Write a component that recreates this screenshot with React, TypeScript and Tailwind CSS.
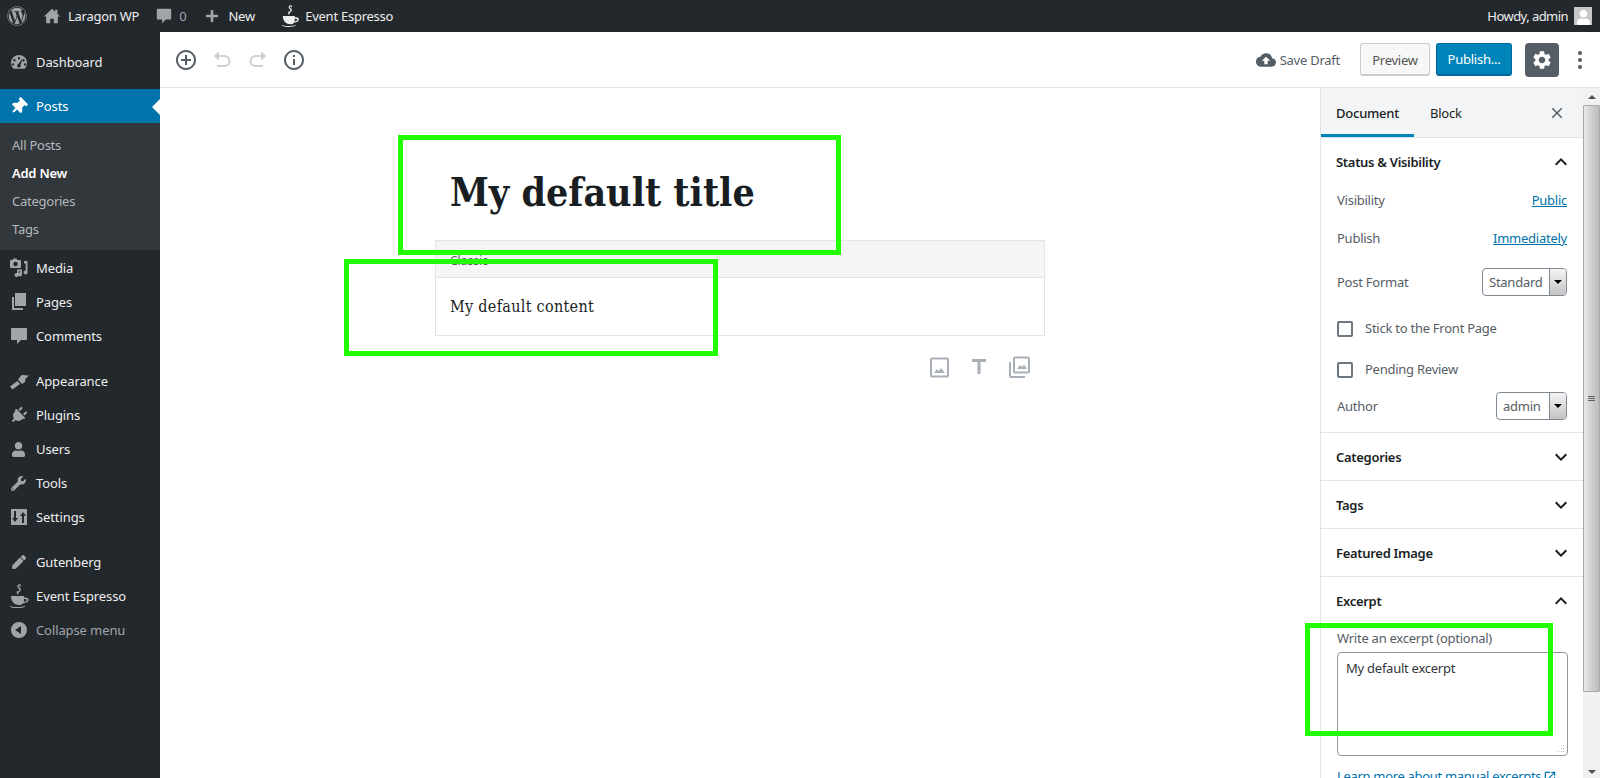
import type { ReactNode } from "react";
import { FaWordpress, FaPlus, FaThumbtack, FaPlug, FaUser, FaWrench, FaPen } from "react-icons/fa";
import {
  MdAddCircleOutline, MdInfoOutline, MdCloudUpload, MdSettings, MdClose,
  MdKeyboardArrowUp, MdKeyboardArrowDown, MdTitle, MdOpenInNew,
} from "react-icons/md";

const Cup = ({ size = 24 }: { size?: number }) => (
  <svg width={(size * 20) / 24} height={size} viewBox="0 0 20 24" fill="currentColor">
    <path stroke="currentColor" strokeWidth="0.5" d="M9 1c2-1 3 0 3 1l-1 0c0-1-1-1-1.500-.5-1 1 3 2.500 2 5-.4 1-1.500 1.500-2.500 1.500 1 1 0 2 0 2h-1c.5-1 .5-1.500-.5-2l1-.5c1 0 2-.5 2-1 .5-2-3-3-1.500-5.500z" />
    <path d="M2 12h13v1.500h1.500c2 0 3 1 3 2.200 0 2-2.500 3.300-5 3.300-1 1.500-2.500 2-4.500 2-4 0-8-3-8-9zm13 3c0 1 0 2-.2 2.800 1.800-.2 3-.8 3-1.800 0-.8-1-1-2.800-1z" />
    <path d="M1 21.500c1 1 3 1.500 7 1.500s7-.5 8-1.500v1c-1 1-4 1.500-8 1.500s-6-.5-7-1.500z" />
  </svg>
);

const Home = () => (
  <svg width="18" height="18" viewBox="0 0 20 20" fill="currentColor">
    <path d="M10 2 1 10.500h2.500V18H8v-5h4v5h4.500v-7.500H19l-3-3V3h-2.500v2.200z" />
  </svg>
);

const Dash = () => (
  <svg width="20" height="20" viewBox="0 0 20 20" fill="currentColor">
    <path fillRule="evenodd" d="M10 3a8 8 0 0 1 8 8c0 2.200-.9 4.200-2.300 5.700H4.300A8 8 0 0 1 2 11a8 8 0 0 1 8-8zM10 5a1.200 1.200 0 1 0 0 2.400A1.200 1.200 0 0 0 10 5zM5.500 7a1.200 1.200 0 1 0 0 2.400 1.200 1.200 0 0 0 0-2.400zM14.500 7a1.200 1.200 0 1 0 0 2.400 1.200 1.200 0 0 0 0-2.400zM4 11.200a1.200 1.200 0 1 0 0 2.400 1.200 1.200 0 0 0 0-2.400zM16 11.200a1.200 1.200 0 1 0 0 2.400 1.200 1.200 0 0 0 0-2.400zM12.800 7.500l-3.400 4.600a1.800 1.800 0 1 0 2 .6l2-4.800z" />
  </svg>
);

const Media = () => (
  <svg width="20" height="20" viewBox="0 0 20 20" fill="currentColor">
    <path fillRule="evenodd" d="M1 2h2.500l1-1.500h3L8.500 2H11a1 1 0 0 1 1 1v6a1 1 0 0 1-1 1H2a1 1 0 0 1-1-1V3a1 1 0 0 1 1-1zm5.500 1.800a2.200 2.200 0 1 0 0 4.400 2.200 2.200 0 0 0 0-4.400z" />
    <path d="M13.500 3H18.500V14.500a2 2 0 1 1-1.800-2V5.500H15V3zM8 11.500h5v5a2 2 0 1 1-1.700-2v-1.200H9.500V17a2 2 0 1 1-1.500-2z" />
  </svg>
);

const Pages = () => (
  <svg width="20" height="20" viewBox="0 0 20 20" fill="currentColor">
    <path d="M6 1h11v13H6zM3 5h2v11h9v2H3z" />
  </svg>
);

const Bubble = ({ size = 20 }: { size?: number }) => (
  <svg width={size} height={size} viewBox="0 0 20 20" fill="currentColor">
    <path d="M3 2h14a1 1 0 0 1 1 1v10a1 1 0 0 1-1 1h-5l-4 4v-4H3a1 1 0 0 1-1-1V3a1 1 0 0 1 1-1z" />
  </svg>
);

const Brush = () => (
  <svg width="20" height="20" viewBox="0 0 20 20" fill="currentColor">
    <path d="M1 15.500 8.500 10l2.500 3-7.500 5.500zM9 8.500 12.500 4 20 4.500l-3.500 3.200L16 11l-3 2z" />
  </svg>
);

const Sliders = () => (
  <svg width="20" height="20" viewBox="0 0 20 20" fill="currentColor">
    <path fillRule="evenodd" d="M2 2h16v16H2zM5 4v7H3l3 4 3-4H7V4zM13 16V9h-2l3-4 3 4h-2v7z" />
  </svg>
);

const Collapse = () => (
  <svg width="20" height="20" viewBox="0 0 20 20" fill="currentColor">
    <path fillRule="evenodd" d="M10 2a8 8 0 1 1 0 16 8 8 0 0 1 0-16zm2 4-6 4 6 4z" />
  </svg>
);

const Undo = ({ flip }: { flip?: boolean }) => (
  <svg width="24" height="24" viewBox="0 0 24 24" className={flip ? "-scale-x-100" : ""} fill="none" stroke="currentColor" strokeWidth="2">
    <path d="M8 8h6.500a5 5 0 0 1 0 10H7" />
    <path d="M9 3.500 3.500 8 9 12.500z" fill="currentColor" stroke="none" />
  </svg>
);

const ImageIcon = () => (
  <svg width="24" height="24" viewBox="0 0 24 24" fill="none" stroke="currentColor" strokeWidth="2">
    <rect x="4" y="3.500" width="17" height="18" rx="1" />
    <path d="M7 18l3-4 2 2 2-3 4 5z" fill="currentColor" stroke="none" />
  </svg>
);

const GalleryIcon = () => (
  <svg width="24" height="24" viewBox="0 0 24 24" fill="none" stroke="currentColor" strokeWidth="2">
    <rect x="7" y="2.500" width="15" height="15" rx="1" />
    <path d="M3 7v14a1 1 0 0 0 1 1h14" />
    <path d="M10 14l3-4 2 2 2-2.500 3 4.500z" fill="currentColor" stroke="none" />
  </svg>
);

const NavRow = ({ icon, label, active, dim }: { icon: ReactNode; label: string; active?: boolean; dim?: boolean }) => (
  <div className={`relative flex h-[34px] items-center ${active ? "bg-[#0073aa] text-white" : dim ? "text-[#a0a5aa]" : "text-[#eeeeee]"}`}>
    <span className={`flex w-9 justify-center pl-[1px] ${active ? "text-white" : "text-[#a0a5aa]"}`}>{icon}</span>
    <span className="pt-[2px] text-[13px] tracking-[-0.1px]">{label}</span>
    {active && <span className="absolute right-0 top-[10px] h-0 w-0 border-y-[8px] border-r-[8px] border-y-transparent border-r-white" />}
  </div>
);

const SelectBox = ({ value, width }: { value: string; width: string }) => (
  <div className={`-mt-[2px] flex h-[28px] items-stretch overflow-hidden rounded-[4px] border border-[#7e8993] bg-white ${width}`}>
    <span className="flex-1 pl-[6px] text-[13px] leading-[27px] tracking-[-0.25px] text-[#555d66]">{value}</span>
    <span className="flex w-[17px] items-center justify-center border-l border-[#7e8993] bg-gradient-to-b from-[#f4f4f4] to-[#c4c4c4]">
      <span className="h-0 w-0 border-x-[4px] border-t-[4px] border-x-transparent border-t-black" />
    </span>
  </div>
);

const PanelHead = ({ label, open }: { label: string; open?: boolean }) => (
  <div className="flex h-[47px] items-center justify-between pl-[15px] pr-[10px]">
    <span className="pt-[2px] text-[13px] font-semibold tracking-[-0.3px] text-[#191e23]">{label}</span>
    {open ? <MdKeyboardArrowUp size={24} className="text-[#191e23]" /> : <MdKeyboardArrowDown size={24} className="text-[#191e23]" />}
  </div>
);

export default function App() {
  return (
    <div className="relative flex h-[778px] w-[1600px] flex-col overflow-hidden bg-white font-['Noto_Sans',sans-serif]">
      {/* admin bar */}
      <div className="flex h-8 shrink-0 items-center bg-[#23282d] text-[13px] tracking-[-0.25px] text-[#eeeeee]">
        <span className="ml-[7px] text-[#a0a5aa]"><FaWordpress size={20} /></span>
        <span className="ml-[16px] text-[#a0a5aa]"><Home /></span>
        <span className="ml-[7px] pt-[1px]">Laragon WP</span>
        <span className="ml-[16px] text-[#a0a5aa]"><Bubble size={18} /></span>
        <span className="ml-[6px] pt-[1px] text-[#a0a5aa]">0</span>
        <span className="ml-[19px] text-[#a0a5aa]"><FaPlus size={14} /></span>
        <span className="ml-[9px] pt-[1px]">New</span>
        <span className="ml-[26px] text-[#eeeeee]"><Cup size={22} /></span>
        <span className="ml-[6px] pt-[1px]">Event Espresso</span>
        <span className="ml-auto pt-[1px] tracking-[-0.55px]">Howdy, admin</span>
        <span className="ml-[6px] mr-[8px] flex h-[18px] w-[18px] items-end justify-center overflow-hidden bg-[#c8c8c8] text-white"><FaUser size={15} /></span>
      </div>

      <div className="flex min-h-0 flex-1">
        {/* admin menu */}
        <aside className="w-40 shrink-0 bg-[#23282d] pt-[13px]">
          <NavRow icon={<Dash />} label="Dashboard" />
          <div className="mt-[10px]">
            <NavRow icon={<FaThumbtack size={17} className="rotate-45" />} label="Posts" active />
          </div>
          <div className="bg-[#32373c] pb-[7px] pl-3 pt-[8px] text-[13px] tracking-[-0.25px] text-[#b4b9be]">
            <div className="h-7 leading-7">All Posts</div>
            <div className="h-7 font-semibold leading-7 text-white">Add New</div>
            <div className="h-7 leading-7">Categories</div>
            <div className="h-7 leading-7">Tags</div>
          </div>
          <div className="mt-[1px]">
            <NavRow icon={<Media />} label="Media" />
            <NavRow icon={<Pages />} label="Pages" />
            <NavRow icon={<Bubble />} label="Comments" />
          </div>
          <div className="mt-[11px]">
            <NavRow icon={<Brush />} label="Appearance" />
            <NavRow icon={<FaPlug size={17} className="rotate-45" />} label="Plugins" />
            <NavRow icon={<FaUser size={15} />} label="Users" />
            <NavRow icon={<FaWrench size={15} />} label="Tools" />
            <NavRow icon={<Sliders />} label="Settings" />
          </div>
          <div className="mt-[11px]">
            <NavRow icon={<FaPen size={14} />} label="Gutenberg" />
            <NavRow icon={<Cup />} label="Event Espresso" />
            <NavRow icon={<Collapse />} label="Collapse menu" dim />
          </div>
        </aside>

        <main className="flex min-w-0 flex-1 flex-col">
          {/* editor header */}
          <header className="flex h-[56px] shrink-0 items-center border-b border-[#e2e4e7] pl-[14px]">
            <MdAddCircleOutline size={24} className="text-[#555d66]" />
            <span className="ml-[12px] text-[#ccd0d4]"><Undo /></span>
            <span className="ml-[12px] text-[#ccd0d4]"><Undo flip /></span>
            <MdInfoOutline size={24} className="ml-[12px] text-[#555d66]" />
            <MdCloudUpload size={20} className="ml-auto text-[#555d66]" />
            <span className="ml-[4px] pt-[2px] text-[13px] tracking-[-0.25px] text-[#555d66]">Save Draft</span>
            <span className="ml-[20px] flex h-[33px] w-[70px] items-center justify-center rounded-[3px] border border-[#cccccc] border-b-[2px] bg-[#f7f7f7] pt-[4px] text-[13px] tracking-[-0.25px] text-[#555555]">Preview</span>
            <span className="ml-[6px] flex h-[33px] w-[76px] items-center justify-center rounded-[3px] border border-[#006799] border-b-[2px] bg-[#0085ba] pt-[1px] text-[13px] tracking-[-0.25px] text-white">Publish...</span>
            <span className="ml-[13px] flex h-[34px] w-[34px] items-center justify-center rounded-[4px] bg-[#555d66] text-white"><MdSettings size={22} /></span>
            <span className="ml-[19px] mr-[18px] flex flex-col gap-[3px]">
              <i className="h-[4px] w-[4px] rounded-full bg-[#555d66]" />
              <i className="h-[4px] w-[4px] rounded-full bg-[#555d66]" />
              <i className="h-[4px] w-[4px] rounded-full bg-[#555d66]" />
            </span>
          </header>

          <div className="flex min-h-0 flex-1">
            {/* canvas */}
            <div className="min-w-0 flex-1 pt-[77px]">
              <div className="mx-auto w-[610px]">
                <h1 className="pl-[15px] font-['DejaVu_Serif_Condensed','DejaVu_Serif',serif] text-[39px] font-bold leading-[54px] text-[#191e23]">My default title</h1>
                <div className="mt-[21px] border border-[#e2e4e7]">
                  <div className="h-[37px] border-b border-[#e2e4e7] bg-[#f5f5f5] pl-[14px] pt-[11px] text-[12px] text-[#555d66]">Classic</div>
                  <div className="flex h-[57px] items-center pl-[14px] font-['DejaVu_Serif_Condensed','DejaVu_Serif',serif] text-[16px] tracking-[0.3px] text-[#191e23]">My default content</div>
                </div>
                <div className="mt-[19px] flex justify-end gap-[16px] pr-[14px] text-[#a9afb7]">
                  <ImageIcon />
                  <MdTitle size={24} />
                  <GalleryIcon />
                </div>
              </div>
            </div>

            {/* document sidebar */}
            <section className="w-[263px] shrink-0 overflow-hidden border-l border-[#e2e4e7]">
              <div className="flex h-[50px] items-stretch border-b border-[#e2e4e7] bg-[#f3f4f5] text-[13px] tracking-[-0.25px]">
                <span className="flex w-[93px] items-center justify-center border-b-[3px] border-[#0085ba] pt-[5px] font-medium text-[#191e23]">Document</span>
                <span className="ml-[16px] flex items-center pt-[2px] text-[#191e23]">Block</span>
                <MdClose size={18} className="ml-auto mr-[17px] self-center text-[#555d66]" />
              </div>
              <div className="h-[295px] border-b border-[#e2e4e7]">
                <PanelHead label="Status & Visibility" open />
                <div className="mt-[3px] px-4 text-[13px] tracking-[-0.25px] text-[#555d66]">
                  <div className="flex h-[26px] items-center justify-between">
                    <span>Visibility</span>
                    <span className="text-[#0073aa] underline">Public</span>
                  </div>
                  <div className="mt-[12px] flex h-[26px] items-center justify-between">
                    <span>Publish</span>
                    <span className="text-[#0073aa] underline">Immediately</span>
                  </div>
                  <div className="mt-[17px] flex h-[28px] items-center justify-between">
                    <span>Post Format</span>
                    <SelectBox value="Standard" width="w-[85px]" />
                  </div>
                  <div className="mt-[23px] flex h-[17px] items-center">
                    <span className="h-[16px] w-[16px] rounded-[2px] border-[2px] border-[#6c7781]" />
                    <span className="ml-[12px]">Stick to the Front Page</span>
                  </div>
                  <div className="mt-[24px] flex h-[17px] items-center">
                    <span className="h-[16px] w-[16px] rounded-[2px] border-[2px] border-[#6c7781]" />
                    <span className="ml-[12px]">Pending Review</span>
                  </div>
                  <div className="mt-[15px] flex h-[28px] items-center justify-between">
                    <span>Author</span>
                    <SelectBox value="admin" width="w-[71px]" />
                  </div>
                </div>
              </div>
              <div className="border-b border-[#e2e4e7]"><PanelHead label="Categories" /></div>
              <div className="border-b border-[#e2e4e7]"><PanelHead label="Tags" /></div>
              <div className="border-b border-[#e2e4e7]"><PanelHead label="Featured Image" /></div>
              <PanelHead label="Excerpt" open />
              <div className="mt-[5px] px-4 text-[13px] tracking-[-0.25px] text-[#555d66]">
                <div className="leading-[18px]">Write an excerpt (optional)</div>
                <div className="relative mt-[5px] h-[104px] w-[231px] rounded-[4px] border border-[#8d96a0] px-2 pt-[6px] text-[#32373c]">
                  My default excerpt
                  <svg className="absolute bottom-[1px] right-[1px]" width="10" height="10" viewBox="0 0 10 10" fill="#b0b0b0">
                    <rect x="7" y="1" width="1" height="1" /><rect x="5" y="4" width="1" height="1" /><rect x="7" y="4" width="1" height="1" />
                    <rect x="2" y="7" width="1" height="1" /><rect x="5" y="7" width="1" height="1" /><rect x="7" y="7" width="1" height="1" />
                  </svg>
                </div>
                <div className="mt-[11px] flex items-center whitespace-nowrap tracking-[-0.32px] text-[#0073aa] underline">
                  Learn more about manual excerpts
                  <MdOpenInNew size={14} className="ml-[2px]" />
                </div>
              </div>
            </section>

            {/* scrollbar */}
            <div className="flex w-[17px] shrink-0 flex-col items-center bg-[#f1f1f1]">
              <span className="mt-[7px] h-0 w-0 border-x-[4px] border-b-[4px] border-x-transparent border-b-[#505050]" />
              <div className="mt-[6px] flex h-[587px] w-full items-center justify-center rounded-[1px] border border-[#a8a8a8] bg-gradient-to-r from-[#e8e8e8] via-[#d0d0d0] to-[#bcbcbc]">
                <span className="flex w-[7px] flex-col gap-[1px]">
                  <i className="h-[1px] bg-[#606060]" />
                  <i className="h-[1px] bg-[#606060]" />
                  <i className="h-[1px] bg-[#606060]" />
                </span>
              </div>
              <span className="mb-[4px] mt-auto h-0 w-0 border-x-[4px] border-t-[4px] border-x-transparent border-t-[#505050]" />
            </div>
          </div>
        </main>
      </div>

      {/* green annotation boxes */}
      <div className="absolute left-[398px] top-[135px] h-[120px] w-[443px] border-[5px] border-[#22ff00]" />
      <div className="absolute left-[344px] top-[259px] h-[97px] w-[374px] border-[5px] border-[#22ff00]" />
      <div className="absolute left-[1305px] top-[623px] h-[113px] w-[248px] border-[5px] border-[#22ff00]" />
    </div>
  );
}
